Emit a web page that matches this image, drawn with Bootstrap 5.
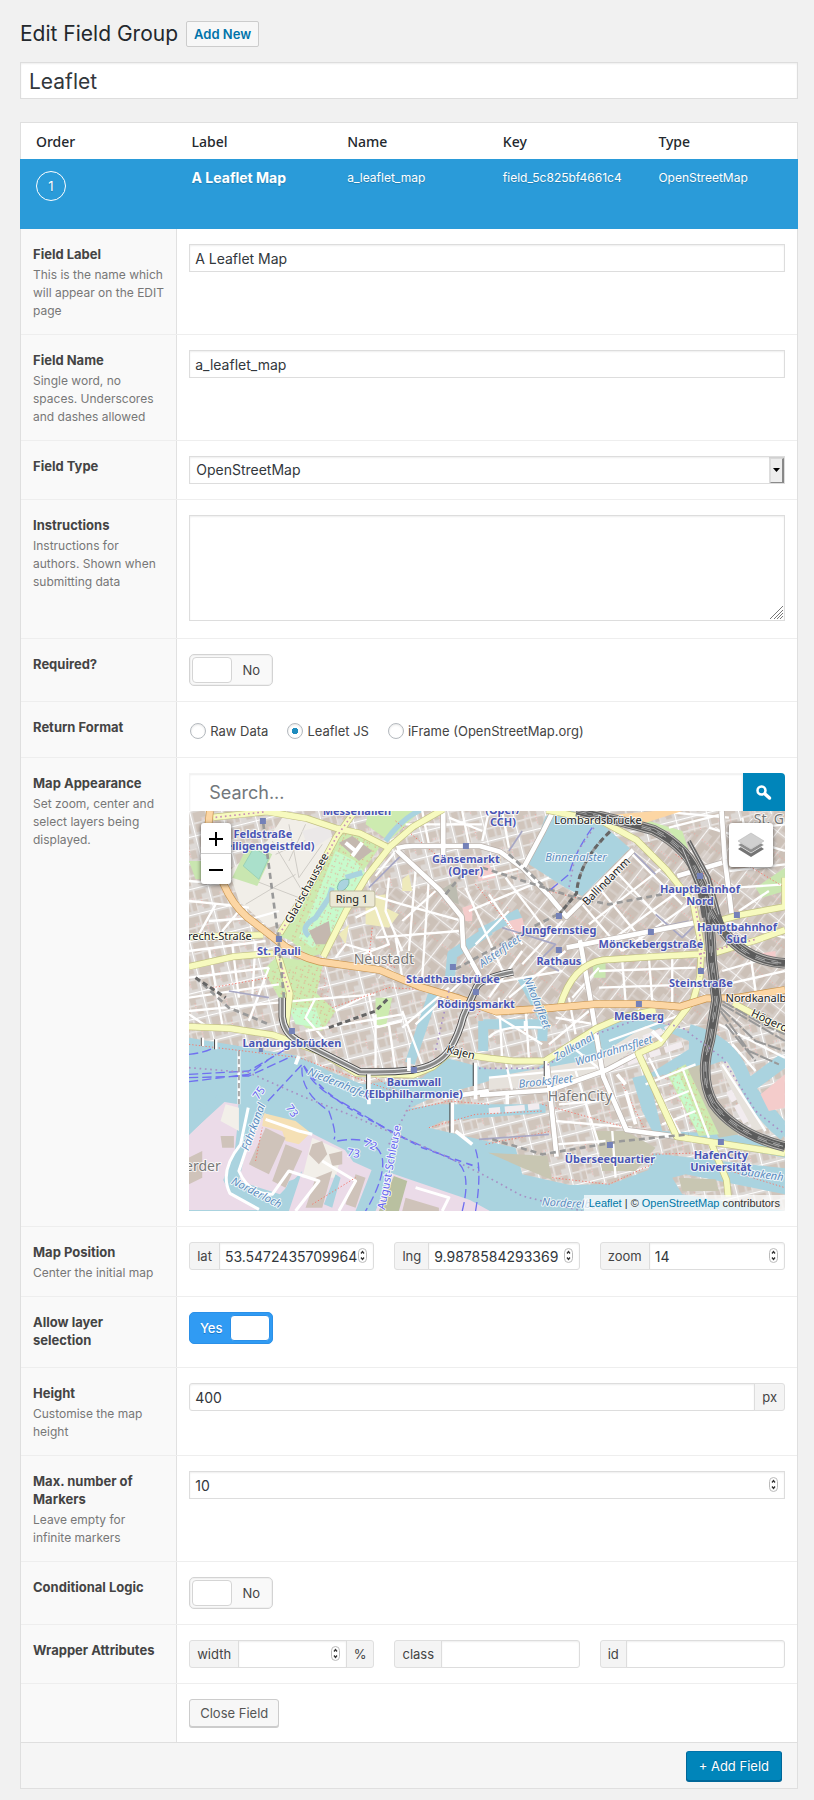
<!DOCTYPE html>
<html lang="en">
<head>
<meta charset="utf-8">
<meta name="viewport" content="width=device-width, initial-scale=1">
<title>Edit Field Group</title>
<link href="https://cdn.jsdelivr.net/npm/bootstrap@5.3.0/dist/css/bootstrap.min.css" rel="stylesheet">
<style>
body{background:#f1f1f1;color:#444;font-family:Inter,"Liberation Sans",sans-serif;font-size:13px;line-height:18px}
.wrap{padding:20px 16px 10px 20px}
.heading{margin-bottom:14px}
.page-title{font-size:21px;line-height:28px;font-weight:400;color:#23282d}
.btn{font-size:13px;line-height:18px;border-radius:3px}
.btn-wp{background:#f7f7f7;border-color:#ccc;color:#555;box-shadow:0 1px 0 #ccc;padding:4px 10px}
.btn-new{background:#f7f7f7;border-color:#ccc;color:#0073aa;font-weight:600;border-radius:2px;padding:3px 7px}
.btn-add{background:#0085ba;border-color:#0073aa #006799 #006799;color:#fff;box-shadow:0 1px 0 #006799;text-shadow:0 -1px 1px #006799;padding:5px 12px}
.form-control,.form-select{border:1px solid #ddd;border-radius:0;box-shadow:inset 0 1px 2px rgba(0,0,0,.07);color:#32373c;background-color:#fff;font-size:14px;line-height:18px;padding:4px 5px;height:28px;min-height:0}
.title-input{font-size:21px;line-height:26px;height:37px;padding:4px 8px 2px;margin-bottom:23px}
.panel{background:#fff;border:1px solid #dfdfdf}
.fields{margin:0 -1px;width:calc(100% + 2px);table-layout:fixed}
.fields th{font:500 14px/20px "Noto Sans",sans-serif;color:#23282d;padding:9px 0 7px 16px;border:0}
.fields td{background:#2a9bd9;color:#fff;font-size:12px;line-height:18px;height:70px;padding:10px 0 0 16px;border:0;box-shadow:none;white-space:nowrap;vertical-align:top;text-shadow:0 1px 1px rgba(0,0,0,.2)}
.fields td .name{font-size:14px;font-weight:700}
.order{width:30px;height:30px;border:1px solid #fff;border-radius:50%;font-size:13px;margin-top:2px}
.setting{border-bottom:1px solid #eee}
.setting-label{flex:0 0 calc(20% + 1px);background:#f9f9f9;border-right:1px solid #e1e1e1;padding:16px 12px 14px}
.setting-input{flex:1 1 0;min-width:0;padding:15px 12px}
.setting-label label,.setting-label .caption-text{display:block;font-weight:700;color:#444;margin-bottom:3px}
.setting-label label:last-child{margin-bottom:4px}
.setting-label p{font-size:12px;color:#777;margin:0}
.setting:last-child{border-bottom:0}
textarea.form-control{height:106px;margin-bottom:2px}
textarea::-webkit-resizer{background:url("data:image/svg+xml,%3Csvg xmlns='http://www.w3.org/2000/svg' width='15' height='15'%3E%3Cpath d='M1 14 14 1M5 14l9-9M8 14l6-6M11 14l3-3' stroke='%23777' fill='none'/%3E%3C/svg%3E") right bottom no-repeat}
.form-select{padding-left:6px;background:#fff url("data:image/svg+xml,%3Csvg xmlns='http://www.w3.org/2000/svg' width='15' height='26'%3E%3Cpath fill='%23eee' d='M0 0h15v26H0z'/%3E%3Cpath fill='%23ddd' d='M0 0h15v2H2v24H0z'/%3E%3Cpath fill='%238a8a8a' d='M15 1v25H1l1-1h11V2z'/%3E%3Cpath d='M4 11h7l-3.500 4z'/%3E%3C/svg%3E") right 0 top 0/15px 26px no-repeat}
.spin{appearance:textfield;-moz-appearance:textfield;background:#fff url("data:image/svg+xml,%3Csvg xmlns='http://www.w3.org/2000/svg' width='10' height='16' fill='none'%3E%3Crect x='.5' y='.5' width='8' height='14' rx='4' stroke='%23bbb'/%3E%3Cpath d='M3 5.500 4.500 3.500 6 5.500M3 9.500l1.500 2L6 9.500' stroke='%23333' stroke-width='1.300'/%3E%3C/svg%3E") right 5px top 5px/10px 16px no-repeat}
.spin::-webkit-inner-spin-button{appearance:none;-webkit-appearance:none;margin:0}
.input-group-text{background:#f4f4f4;border-color:#dfdfdf;border-radius:3px;color:#444;font-size:13px;line-height:18px;padding:4px 7px;height:28px}
.input-group .form-control:last-child{border-radius:0 3px 3px 0}
.input-group .form-control:first-child{border-radius:3px 0 0 3px}
.triple{display:grid;grid-template-columns:repeat(3,1fr);gap:20px}
.switcher{display:inline-flex;align-items:center;width:84px;height:32px;border:1px solid #d3d3d3;border-radius:5px;background:#f9f9f9;padding:2px;box-shadow:inset 0 0 0 1px #f0f0f0;vertical-align:top;cursor:pointer}
.setting-input .switcher .knob{width:40px;height:26px;background:#fff;border:1px solid #d5d5d5;border-radius:4px}
.switcher .word{flex:1;text-align:center}
.switcher.on{background:#309bf3;border-color:#2b90e8;box-shadow:none;color:#fff;font-weight:500;padding:2px;text-shadow:0 1px 0 #1c78c8}
.setting-input .switcher.on .knob{border-color:#2b90e8}
.return-format{gap:19px;height:25px;padding:2px 1px 0}
.form-check-input[type=radio]{width:16px;height:16px;margin:0 4px 0 0;border:1px solid #b4b9be;box-shadow:inset 0 1px 2px rgba(0,0,0,.1)}
.form-check-input[type=radio]:checked{background:#fff radial-gradient(circle,#1e8cbe 0 3px,transparent 3.500px);border-color:#b4b9be}
.map-search{height:38px}
.map-search input{height:38px;border-color:#f3f3f3;border-bottom:0;font-size:18px;padding:4px 19px}
.map-search input::placeholder{color:#72777c}
.map-search button{flex:none;width:42px;background:#0085ba;border:0;border-radius:0 4px 0 0;padding:0}
.map{position:relative;height:400px;overflow:hidden;background:#aad3df}
.map>svg{display:block;width:100%;height:100%}
.ctl{position:absolute;top:12px;background:#fff;border-radius:3px;box-shadow:0 1px 4px rgba(0,0,0,.6)}
.ctl-zoom{left:12px;width:30px}
.ctl-zoom button{display:flex;align-items:center;justify-content:center;width:30px;height:30px;background:none;border:0;padding:0}
.ctl-zoom button+button{border-top:1px solid #ccc;height:31px}
.ctl-layers{right:12px;width:44px;height:44px;border:0;padding:0}
.attrib{position:absolute;right:0;bottom:0;background:rgba(255,255,255,.7);font:11px/16px "Liberation Sans",sans-serif;color:#333;padding:0 5px}
.attrib a{color:#0078a8;text-decoration:none}
.bar-bottom{background:#f5f5f5;border-top:1px solid #dfdfdf;padding:8px 15px 7px}
.st{font:700 11px "Noto Sans",sans-serif;fill:#4b56b4;text-anchor:middle}
.rd{font:11px "Noto Sans",sans-serif;fill:#222;text-anchor:middle}
.pl{font:14px "Noto Sans",sans-serif;fill:#777;text-anchor:middle}
.wt{font:italic 11px "Noto Sans",sans-serif;fill:#5b8cc0;text-anchor:middle}
.fr{font:11px "Noto Sans",sans-serif;fill:#6464f0;text-anchor:middle}
.halo{stroke:#fff;stroke-opacity:.8;stroke-width:2px;paint-order:stroke;stroke-linejoin:round}
</style>
</head>
<body>
<main class="wrap">
<div class="d-flex align-items-center gap-2 heading">
<h1 class="page-title m-0">Edit Field Group</h1>
<button type="button" class="btn btn-new">Add New</button>
</div>
<input type="text" class="form-control title-input" aria-label="Field group title" value="Leaflet">
<form class="panel">
<table class="table fields mb-0">
<thead><tr><th scope="col">Order</th><th scope="col">Label</th><th scope="col">Name</th><th scope="col">Key</th><th scope="col">Type</th></tr></thead>
<tbody><tr><td><div class="order d-flex align-items-center justify-content-center">1</div></td><td><span class="name">A Leaflet Map</span></td><td>a_leaflet_map</td><td>field_5c825bf4661c4</td><td>OpenStreetMap</td></tr></tbody>
</table>
<div class="settings">
<div class="setting d-flex"><div class="setting-label"><label for="f-label">Field Label</label><p>This is the name which will appear on the EDIT page</p></div><div class="setting-input"><input id="f-label" type="text" class="form-control" value="A Leaflet Map"></div></div>
<div class="setting d-flex"><div class="setting-label"><label for="f-name">Field Name</label><p>Single word, no spaces. Underscores and dashes allowed</p></div><div class="setting-input"><input id="f-name" type="text" class="form-control" value="a_leaflet_map"></div></div>
<div class="setting d-flex"><div class="setting-label"><label for="f-type">Field Type</label></div><div class="setting-input"><select id="f-type" class="form-select"><option>OpenStreetMap</option></select></div></div>
<div class="setting d-flex"><div class="setting-label"><label for="f-instr">Instructions</label><p>Instructions for authors. Shown when submitting data</p></div><div class="setting-input"><textarea id="f-instr" class="form-control"></textarea></div></div>
<div class="setting d-flex"><div class="setting-label"><label for="f-req">Required?</label></div><div class="setting-input"><label class="switcher"><input id="f-req" type="checkbox" class="visually-hidden"><span class="knob"></span><span class="word">No</span></label></div></div>
<div class="setting d-flex"><div class="setting-label"><span class="caption-text">Return Format</span></div>
<div class="setting-input"><div class="d-flex align-items-center return-format">
<label class="d-flex align-items-center"><input class="form-check-input" type="radio" name="fmt">Raw Data</label>
<label class="d-flex align-items-center"><input class="form-check-input" type="radio" name="fmt" checked>Leaflet JS</label>
<label class="d-flex align-items-center"><input class="form-check-input" type="radio" name="fmt">iFrame (OpenStreetMap.org)</label>
</div></div></div>
<div class="setting d-flex"><div class="setting-label"><label for="f-search">Map Appearance</label><p>Set zoom, center and select layers being displayed.</p></div>
<div class="setting-input">
<div class="map-search d-flex"><input id="f-search" type="text" class="form-control" placeholder="Search..."><button type="button" class="btn" aria-label="Search"><svg width="18" height="18" viewBox="0 0 18 18" fill="none" stroke="#fff"><circle cx="6.500" cy="6.500" r="4" stroke-width="2.500"/><path d="M10 10 14.500 14" stroke-width="3.500" stroke-linecap="round"/></svg></button></div>
<div class="map">
<svg viewBox="0 0 596 400" preserveAspectRatio="xMidYMid slice" role="img" aria-label="Map of Hamburg">
<defs>
<pattern id="blocksA" width="94" height="76" patternUnits="userSpaceOnUse" patternTransform="rotate(-14)"><path fill="#ddd9d6" d="M0 0h94v76H0z"/><path fill="#d0c5bc" d="M8 8h38v20H30v10H8zM52 8h34v14H70v14H52zM8 44h20v24H8zM34 42h30v12H50v14H34zM68 40h18v28H68z"/><path d="M0 0H94M0 0V76" stroke="#fff" stroke-width="6"/><path d="M49 4V72M6 40H90" stroke="#ece7e4" stroke-width="3"/><path d="M30 32h18M66 60V30" stroke="#f79a92" stroke-width="2" stroke-dasharray="3 5"/></pattern>
<pattern id="blocksB" width="84" height="104" patternUnits="userSpaceOnUse" patternTransform="rotate(38)"><path fill="#d6cec8" d="M0 0h84v104H0z"/><path fill="#ccc1b8" d="M8 8h30v44H24V30H8zM44 8h32v20H44zM44 36h32v60H62V60H44zM8 60h46v14H30v22H8z"/><path d="M0 0H84M0 0V104" stroke="#fff" stroke-width="5"/><path d="M41 5V98M56 66v30" stroke="#e6dfdb" stroke-width="3"/><path d="M6 56H78" stroke="#f79a92" stroke-width="2" stroke-dasharray="3 6"/></pattern>
<pattern id="dots" width="38" height="34" patternUnits="userSpaceOnUse" patternTransform="rotate(20)"><path d="M2 8h14M20 26h14M30 4v12M8 18v12" stroke="#f37a70" stroke-width="2.500" stroke-dasharray="3 4"/></pattern>
<path id="orange" d="M63 0 58 47Q70 140 103 217 130 280 173 317L263 387Q320 435 393 452L573 477 693 527 803 560 923 602 1073 592 1223 579H1373L1473 587 1553 562H1633L1788 537"/>
<path id="yellow" d="M73 19 233 2 353 22 443 52 513 67 593 107M763-5 673 47 603 107 533 197 473 297 403 437M493 7 443 77 373 207 273 367M263 417 303 547 290 650M0 377 223 372M0 467 133 437 253 427M0 647 123 652 253 672 393 722 503 787 673 792 733 767 783 725 903 742 973 750H1068L1223 652 1303 617 1400 597M1073-3 1243 32 1343 87 1433 177 1513 277 1538 407 1533 497 1513 567 1413 697 1348 727 1463 977 1788 1027M1563 987 1613 1107 1618 1157M1113 587Q1150 460 1243 447L1393 437 1573 427 1703 387 1788 357M1523 347 1653 312 1788 287V200M1633 577 1788 657"/>
<path id="white" d="M623 117 753 237 818 317 823 407 873 497M623 112Q650 105 673 105H873L933 122 1003 172 1083 257 1133 317 1333 117M1093 0 1063 60 1003 172M763 0V160M1173 387 1203 557 1243 797 1313 957 1463 977M873 852 1083 837 1253 777 1348 727M1598 0 1608 147 1628 307M1073 747 1103 1037M1133 410 1520 335M1465 195 1600 155M763 860 900 840"/>
<path id="rail" d="M1163 0Q1300 30 1393 57 1500 110 1533 207 1560 250 1568 447L1583 567 1563 687Q1530 800 1573 877 1640 970 1788 1007M1563 297Q1640 450 1788 457"/>
<path id="viaduct" d="M280 560V617Q285 665 323 687L403 727 513 782Q600 785 673 777 750 765 783 715 810 670 823 617L863 527Q880 500 973 483"/>
</defs>
<g transform="scale(.33333)" fill="none" stroke-linejoin="round">
<path fill="url(#blocksA)" d="M0 0H1788V1200H0z"/>
<path fill="url(#blocksB)" d="M560 230 1100 240 1350 100 1788 0V640H1100L560 500z"/>
<path fill="#f1eee8" d="M235 90 280 20 400 40 430 80 300 330 240 350 150 270 120 180z"/>
<path d="M250 90 340 240M300 40 330 200 400 100M200 210 330 260M260 130 390 70M170 280 320 190M350 40 300 150" stroke="#cfccc6" stroke-width="3"/>
<path fill="#ebe8e8" d="M340 60 420 40 430 75 360 120z"/>
<path fill="#c9e6b0" d="M130 200 180 95 250 130 205 225zM0 150H60V205H20zM1210 450 1250 440V500H1215zM1700 230 1788 170V240L1720 260z"/>
<path fill="#aae0cb" stroke="#8cc9b0" stroke-width="2" d="M163 165 195 110 240 140 210 205z"/>
<path fill="#cdebb0" d="M423 107 453 47 573 107 483 237 403 427 363 437 303 387 273 377zM223 477 263 437 403 457 383 547 440 600 400 660 350 650 300 600 270 560zM560 560 610 560 590 650 560 640zM540 -5H700L600 90 530 40zM1310 40 1380 30 1480 60 1500 120 1440 60z"/>
<path fill="#c8facc" d="M440 120 500 150 540 200 470 290 420 380 370 410 330 380zM300 590 380 590 400 650 320 640z"/>
<path fill="url(#dots)" d="M423 107 453 47 573 107 483 237 403 427 303 387zM223 477 403 457 440 600 400 660 300 600z"/>
<path d="M700-5Q640 20 590 90M360 375Q330 350 380 320L420 260 430 230M520 185 470 200" stroke="#aad3df" stroke-width="16"/>
<path fill="#aad3df" stroke="#7fc0b0" stroke-width="3" d="M445 230Q450 200 480 205 485 230 450 245z"/>
<path fill="#c4b8af" d="M450 95 490 75 550 120 510 150zM360 360 420 330 430 400 380 400z"/>
<path d="M470 95 500 120M520 95 490 135" stroke="#fff" stroke-width="12"/>
<path fill="#eeeabb" d="M530 260 590 250 590 290 630 310 600 350 530 340zM640 205 660 190 670 240 640 240zM450 370 480 340 470 400z"/>
<path fill="#bcbcb0" d="M750 240 800 210 810 280 780 270z"/>
<path fill="#aad3df" d="M1070 15 1150 0 1240 40 1323 112 1180 255 1130 230 1020 160zM0 680 150 705 330 735 420 780 520 820 700 800 770 740 900 775H1040L1120 720 1223 650 1350 620 1500 660 1650 770 1788 930V1200H0z"/>
<path d="M873 367 993 307M903 357 790 430 783 500M733 547 663 757M1000 500 1063 620 1060 690M883 640H1060M883 630V720" stroke="#aad3df" stroke-width="30"/>
<path fill="url(#blocksA)" d="M660 892 720 865 900 810 1080 790 1330 700 1410 650 1500 690 1500 715 1380 790 1330 800 1360 900 1390 960 1470 980 1788 1040V1072L1393 1027 1378 1077 1268 1119 1143 1122 1000 1090 980 1010 720 950 760 930 1070 905V880L750 880zM1380 800 1540 770 1600 750 1700 850 1788 980V1020L1640 970 1420 960zM1450 1100 1490 1090 1788 1150V1200L1480 1150z"/>
<path fill="#e6e2dc" d="M900 800 1210 745 1370 645 1400 660 1260 770 1080 825 900 835zM1590 760 1640 740 1740 950 1690 960z"/>
<path fill="#c8c6b2" d="M898 1025 1075 1035 1090 1107 1000 1070zM1470 780 1540 760 1570 890 1650 970 1590 980zM1220 960 1310 960 1400 1010 1340 1080 1240 1080zM1470 1100 1580 1105 1590 1140 1480 1140z"/>
<path d="M1500 660Q1620 690 1660 790 1700 900 1788 970M1660 840 1788 745" stroke="#aad3df" stroke-width="42"/>
<path fill="#f4cccb" d="M1715 850 1788 790V890L1740 900z"/>
<path fill="#f4cccb" d="M860 170 900 160 920 200 870 210zM960 330 1000 320 1010 360 970 370zM1700 430 1760 420V450H1710zM820 290 850 280V330H830z"/>
<path fill="#cdebb0" d="M1435 790 1490 760 1590 970 1530 975z"/>
<path fill="#c8facc" d="M1445 800 1470 790 1545 960H1525z"/>
<path fill="url(#dots)" d="M1420 790 1490 760 1580 960 1520 970z"/>
<path fill="#ebdbe8" d="M0 972 103 872 148 880 148 920 138 1017 103 1107 123 1147 213 1197H0zM228 907 368 967 468 1017 493 1052 548 1077 500 1200H300L340 1080 273 1150 150 1110 175 1000zM608 1087 843 1167 903 1200H560z"/>
<path fill="#f5e0b5" d="M225 907 320 930 365 965 330 1000 290 990 280 960 220 945z"/>
<path fill="#f2efe9" d="M370 980 460 1020 440 1100 340 1100zM110 880 150 890 150 960 95 930z"/>
<path fill="#cfc3ba" d="M230 950 290 980 240 1090 180 1060zM290 1000 340 1020 290 1130 250 1110zM370 1000 400 990 415 1030 390 1060 360 1030zM420 1030 460 1020V1060L430 1065zM380 1100 430 1080 400 1190 350 1190zM650 1160 750 1190V1200H640zM0 1040 40 1020V1100L0 1120zM95 975H135V1010H100zM500 1090 530 1100 500 1190 470 1180z"/>
<path fill="#b9c0a0" d="M615 1095 655 1110 630 1200H570z"/>
<path fill="#aad3df" d="M440 1090 455 1100 430 1190 405 1180zM300 1110 330 1100 300 1190 270 1180zM0 920 90 850 110 870 0 970z"/>
<path d="M178 890 155 1000Q90 1080 123 1147L210 1195M150 720V880M200 930 150 1080Q180 1150 250 1150L300 1080 390 1110 320 1200M400 1050 500 1110 450 1200M230 925 330 960 370 970M680 1130 780 1160 760 1200" stroke="#fff" stroke-width="9"/>
<path d="M150 720V880" stroke="#aaa" stroke-width="6" stroke-dasharray="16 8"/>
<g stroke="#fff" stroke-width="7">
<path d="M0 270 100 280 180 290M60 330 200 320 270 300M0 210 120 220M30 370 80 280M100 360 150 300M0 420 230 390M0 500 240 470M0 560 200 530 270 520M0 600 370 565 560 550M60 650 0 610M60 410 100 640M130 400 150 560M200 390 190 560M240 470 180 630"/>
<path d="M560 195 623 117M540 250 640 280 820 330M500 320 560 290 600 400 520 430M600 200 590 300 640 420M680 180 660 420M720 200 700 500M560 380 810 360M440 440 470 400 540 420 570 470M620 380 640 500M740 240 640 330M440 600 540 550 560 650 640 630M350 660 640 610M380 560 350 620 410 690M600 640 620 780M560 610 560 770M640 650 780 530M700 760 640 600M680 640 830 500"/>
<path d="M650 40H880M700 0 720 100M780 20 880 60M820 0 840 100M900 0 880 90M940 0 960 110M880 200 1000 170M840 300 1080 200M860 400 960 300M900 250 1000 400M950 200 1080 370M830 230 950 500M1000 460 1120 330M900 560 1000 420M960 560 1130 420M890 520 1120 480"/>
<path d="M1180 280 1300 420M1230 230 1370 400M1280 180 1430 340M1330 130 1480 280M1200 340 1420 170M1250 400 1470 240M1300 420 1500 280M1230 480 1520 470M1230 530 1520 520M1300 450 1310 570M1380 440 1390 570M1450 440V580M1150 560 1230 470"/>
<path d="M1400 0 1620 20M1440 50 1598 10M1560 50 1788 120M1660 20 1700 180M1620 60 1788 40M1620 180 1788 160M1640 230 1788 220M1600 330 1788 380M1600 480 1740 440M1610 520 1788 480M1680 400 1700 540M1740 240 1650 300"/>
<path d="M900 680Q930 640 1060 650M930 560 940 750M1010 590 1020 745M900 600 1060 700M1100 620 1220 640M1140 560 1160 670M1080 700 1200 600M900 800 1220 770M950 750 970 840M1140 700 1240 780M1260 690 1480 610M1270 730 1420 660M1160 780 1230 1000M1100 930 1330 950M1100 1000 1250 990M1270 960 1280 1100M1110 880 1230 870M1380 740 1410 800M1410 850 1480 980M1370 820 1520 760M1400 880 1500 840M1420 940 1520 900M1480 770 1560 980M1600 760 1730 960M1590 640 1788 740M1630 700 1700 780"/>
</g>
<g stroke="#f2ecef" stroke-width="18" stroke-dasharray="34 14 60 10"><path d="M1210 745 1470 640M1270 770 1480 700M900 900 1060 885M1410 850 1450 960M1620 840 1680 950"/></g>
<g stroke="#f27b70" stroke-width="3" stroke-dasharray="4 6"><path d="M0 700 330 740 640 850M560 800 640 850M650 900 780 870 900 880M720 950 860 910 1060 900M890 1000 1090 960M1090 1100 1260 1120 1390 1060M1300 820 1370 960M1390 1030 1560 1025M1060 880 1350 960M430 590 600 530 780 540M550 350 540 440 620 470M860 220 1000 390M1080 240 1200 270M1460 130 1620 240M1640 140 1788 230M1560 1060 1788 1130M200 1050 220 950M370 1180 500 1100M860 620 900 560M620 30 740 130M70 530 240 500"/></g>
<g stroke="#a7a7c4" stroke-width="5"><path d="M940 350 1100 400 1050 450 1110 480M1170 400 1500 330M1400 310 1480 380 1520 340M120 540 240 560M870 985 1080 970M1330 120 1400 190M960 120 1000 60M640 130 540 230"/></g>
<use href="#white" stroke="#b8b0aa" stroke-width="18"/><use href="#white" stroke="#fff" stroke-width="14"/>
<use href="#yellow" stroke="#c3c283" stroke-width="21"/><use href="#yellow" stroke="#f7fabf" stroke-width="17"/>
<use href="#orange" stroke="#c9954f" stroke-width="23"/><use href="#orange" stroke="#fcd6a4" stroke-width="19"/>
<path d="M493 7 443 77 373 207 273 367M263 417 303 547M1520 287 1538 407 1533 497M1530 430 1700 385M80 19 233 2" stroke="#c98fb5" stroke-width="5" stroke-dasharray="5 9"/>
<path d="M1230 15 1400 0H1480L1340 45z" fill="#fcd6a4"/>
<use href="#rail" stroke="#707070" stroke-width="32"/><use href="#rail" stroke="#c4c0bc" stroke-width="26"/><use href="#rail" stroke="#5c5c5c" stroke-width="21"/><use href="#rail" stroke="#aaa" stroke-width="11" stroke-dasharray="70 30"/><use href="#rail" stroke="#5c5c5c" stroke-width="7"/><use href="#rail" stroke="#ddd" stroke-width="2" stroke-dasharray="30 20"/>
<path d="M1500 90 1560 200 1590 310M1480 110 1530 230 1545 320M1590 310 1620 400" stroke="#666" stroke-width="12"/><path d="M1500 90 1560 200 1590 310M1480 110 1530 230" stroke="#ccc" stroke-width="3"/>
<path d="M1595 590 1700 690 1788 720M1595 600 1680 720 1770 760M1600 580 1788 690M1610 640 1700 750M1600 570 1720 640 1788 670" stroke="#999" stroke-width="6" stroke-dasharray="40 6"/>
<use href="#viaduct" stroke="#444" stroke-width="22"/><use href="#viaduct" stroke="#e8e8e8" stroke-width="17"/><use href="#viaduct" stroke="#888" stroke-width="9"/>
<path d="M223 37 268 377 285 560M1263 62Q1170 150 1163 247L1113 307 1033 347 790 480M880 170 1160 260 1260 280 1420 250M20 500 120 590 240 640M770 250 820 190M960 130 1080 240M910 985 1060 1030 1300 990 1500 970" stroke="#999" stroke-width="8" stroke-dasharray="18 12"/>
<path d="M1263 62Q1170 150 1163 247L1113 307M20 500 110 560M420 650 560 600 600 560" stroke="#666" stroke-width="9" stroke-dasharray="16 10"/>
<g stroke="#7070f0" stroke-width="4" stroke-dasharray="28 12"><path d="M0 730Q50 725 75 710M0 790 180 780 290 715M0 800 180 795 310 735M0 812 180 790 260 730M237 870 340 760Q330 840 420 900 445 970 435 985M345 765Q370 830 470 880L620 970 800 1050Q850 1080 820 1200M445 990Q560 970 580 1040 590 1100 530 1200M860 1015Q880 1080 860 1200M1210 50Q1160 120 1140 190L1080 240"/></g>
<path d="M345 765Q400 850 530 920L700 1010 870 1070" stroke="#7070f0" stroke-width="5" stroke-dasharray="20 16"/>
<g stroke="#a78fc4" stroke-width="5" stroke-dasharray="5 11"><path d="M0 770 180 785 350 860 480 910 620 970 780 1040 900 1100 1000 1155 1180 1200M600 1000 670 870M870 772H1060L1220 670 1360 620 1480 650 1600 740 1700 900 1788 970M1215 50 1160 130 1140 230M780 540 740 720"/></g>
<path d="M40 680v25M80 685v30M540 790v90M660 740v40M790 875v90M800 960 850 1000M860 755v110M1010 630v30M1070 750v70M1285 790 1310 820M1310 840 1340 940M1390 660 1420 690M330 735 320 760M955 845v35" stroke="#fff" stroke-width="11"/><path d="M37 680v25M77 685v30M533 790v70M783 875v90M853 755v70M1066 750v60" stroke="#444" stroke-width="3"/>
</g>
<g fill="#7481b8"><path d="M71 7h6v6h-6zM87 125h6v6h-6zM274 32h6v6h-6zM261 153h6v6h-6zM284 178h6v6h-6zM100 217h6v6h-6zM70 237h4v4h-4zM222 256h6v6h-6zM367 102h6v6h-6zM367 136h6v6h-6zM459 118h6v6h-6zM508 62h6v6h-6zM545 101h6v6h-6zM509 157h6v6h-6zM447 190h6v6h-6zM418 331h6v6h-6zM529 328h6v6h-6z"/></g>
<g class="halo">
<text class="pl" x="195" y="153">Neustadt</text><text class="pl" x="391" y="290">HafenCity</text><text class="pl" x="14" y="360">erder</text><text class="pl" x="580" y="13">St. G</text>
<g class="wt"><text x="387" y="50">Binnenalster</text><text transform="translate(149 276) rotate(22)">Niedernhafen</text><text transform="translate(68 317) rotate(-70)">Fährkanal</text><text transform="translate(66 385) rotate(27)">Norderloch</text><text transform="translate(387 239) rotate(-30)">Zollkanal</text><text transform="translate(426 243) rotate(-17)">Wandrahmsfleet</text><text transform="translate(357 274) rotate(-6)">Brooksfleet</text><text transform="translate(345 193) rotate(68)">Nikolaifleet</text><text transform="translate(313 143) rotate(-35)">Alsterfleet</text><text transform="translate(380 396) rotate(3)">Norderelbe</text><text transform="translate(573 367) rotate(8)">Baakenh</text></g>
<g class="fr"><text transform="translate(73 284) rotate(-55)">75</text><text transform="translate(100 302) rotate(55)">73</text><text transform="translate(180 337) rotate(25)">72</text><text transform="translate(164 346) rotate(8)">73</text><text transform="translate(204 357) rotate(-79)">August-Schleuse</text></g>
<g class="rd"><text x="409" y="13">Lombardsbrücke</text><text transform="translate(420 73) rotate(-45)">Ballindamm</text><text transform="translate(121 79) rotate(-61)">Glacischaussee</text><text x="25" y="129">Utrecht-Straße</text><text x="567" y="191">Nordkanalb</text><text transform="translate(579 213) rotate(25)">Högerd</text><text transform="translate(271 245) rotate(14)">Kajen</text></g>
</g>
<rect x="141" y="80" width="45" height="16" rx="2" fill="#ebe8d5" stroke="#bdb99d"/><text class="rd" x="163" y="92">Ring 1</text>
<g class="st halo"><text x="168" y="4">Messehallen</text><text x="74" y="27">Feldstraße</text><text x="75" y="39">(Heiligengeistfeld)</text><text x="90" y="144">St. Pauli</text><text x="277" y="52">Gänsemarkt</text><text x="277" y="64">(Oper)</text><text x="314" y="3">(Oper/</text><text x="314" y="15">CCH)</text><text x="264" y="172">Stadthausbrücke</text><text x="287" y="197">Rödingsmarkt</text><text x="103" y="236">Landungsbrücken</text><text x="225" y="275">Baumwall</text><text x="225" y="287">(Elbphilharmonie)</text><text x="370" y="123">Jungfernstieg</text><text x="370" y="154">Rathaus</text><text x="462" y="137">Mönckebergstraße</text><text x="511" y="82">Hauptbahnhof</text><text x="511" y="94">Nord</text><text x="548" y="120">Hauptbahnhof</text><text x="548" y="132">Süd</text><text x="512" y="176">Steinstraße</text><text x="450" y="209">Meßberg</text><text x="421" y="352">Überseequartier</text><text x="532" y="348">HafenCity</text><text x="532" y="360">Universität</text></g>
</svg>
<div class="ctl ctl-zoom"><button type="button" aria-label="Zoom in"><svg width="14" height="16" fill="none" stroke="#000" stroke-width="2"><path d="M0 9h14M7 2v14"/></svg></button><button type="button" aria-label="Zoom out"><svg width="14" height="16" fill="none" stroke="#000" stroke-width="2"><path d="M0 9h14"/></svg></button></div>
<button type="button" class="ctl ctl-layers" aria-label="Layers"><svg width="26" height="26" viewBox="0 0 26 26"><path fill="#747474" d="m0 17 3-2 10 6 10-6 3 2-13 8z"/><path fill="#8e8e8e" d="m0 13 3-2 10 6 10-6 3 2-13 8z" stroke="#fff" stroke-width=".5"/><path fill="#d0d0d0" stroke="#b0b0b0" stroke-width=".5" d="M13 1 26 9l-13 8L0 9z"/></svg></button>
<div class="attrib"><a href="#">Leaflet</a> | © <a href="#">OpenStreetMap</a> contributors</div>
</div></div></div>
<div class="setting d-flex"><div class="setting-label"><span class="caption-text">Map Position</span><p>Center the initial map</p></div><div class="setting-input"><div class="triple">
<div class="input-group flex-nowrap"><label class="input-group-text" for="m-lat">lat</label><input id="m-lat" type="number" step="any" class="form-control spin" value="53.5472435709964"></div>
<div class="input-group flex-nowrap"><label class="input-group-text" for="m-lng">lng</label><input id="m-lng" type="number" step="any" class="form-control spin" value="9.9878584293369"></div>
<div class="input-group flex-nowrap"><label class="input-group-text" for="m-zoom">zoom</label><input id="m-zoom" type="number" class="form-control spin" value="14"></div>
</div></div></div>
<div class="setting d-flex"><div class="setting-label"><label for="f-layer">Allow layer<br>selection</label></div><div class="setting-input"><label class="switcher on"><input id="f-layer" type="checkbox" class="visually-hidden" checked><span class="word">Yes</span><span class="knob"></span></label></div></div>
<div class="setting d-flex"><div class="setting-label"><label for="f-height">Height</label><p>Customise the map height</p></div><div class="setting-input"><div class="input-group flex-nowrap"><input id="f-height" type="text" class="form-control" value="400"><span class="input-group-text">px</span></div></div></div>
<div class="setting d-flex"><div class="setting-label"><label for="f-max">Max. number of Markers</label><p>Leave empty for<br>infinite markers</p></div><div class="setting-input"><input id="f-max" type="number" class="form-control spin" value="10"></div></div>
<div class="setting d-flex"><div class="setting-label"><label for="f-logic">Conditional Logic</label></div><div class="setting-input"><label class="switcher"><input id="f-logic" type="checkbox" class="visually-hidden"><span class="knob"></span><span class="word">No</span></label></div></div>
<div class="setting d-flex"><div class="setting-label"><span class="caption-text">Wrapper Attributes</span></div><div class="setting-input"><div class="triple">
<div class="input-group flex-nowrap"><label class="input-group-text" for="w-width">width</label><input id="w-width" type="number" class="form-control spin"><span class="input-group-text">%</span></div>
<div class="input-group flex-nowrap"><label class="input-group-text" for="w-class">class</label><input id="w-class" type="text" class="form-control"></div>
<div class="input-group flex-nowrap"><label class="input-group-text" for="w-id">id</label><input id="w-id" type="text" class="form-control"></div>
</div></div></div>
<div class="setting d-flex"><div class="setting-label"></div><div class="setting-input"><button type="button" class="btn btn-wp">Close Field</button></div></div>
</div>
<div class="bar-bottom text-end"><button type="button" class="btn btn-add">+ Add Field</button></div>
</form>
</main>
<script src="https://cdn.jsdelivr.net/npm/bootstrap@5.3.0/dist/js/bootstrap.bundle.min.js"></script>
</body>
</html>
